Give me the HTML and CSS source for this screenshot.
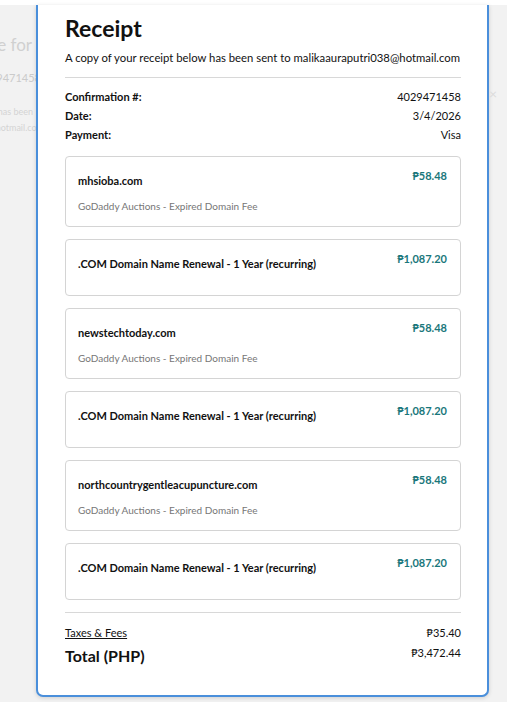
FILE: index.html
```html
<!DOCTYPE html>
<html>
<head>
<meta charset="utf-8">
<link rel="stylesheet" href="styles.css">
</head>
<body>
<div class="topstrip"></div>
<div class="page">
  <div class="bg-left">
    <div class="bg-title">Purchase for</div>
    <div class="bg-num">4029471458</div>
    <div class="bg-small bg-s1">A copy of your receipt below has been</div>
    <div class="bg-small bg-s2">malikaauraputri038@hotmail.com</div>
  </div>
  <div class="modal">
    <h1 class="title">Receipt</h1>
    <p class="lead">A copy of your receipt below has been sent to malikaauraputri038@hotmail.com</p>
    <div class="meta">
      <div class="meta-row"><span class="meta-label">Confirmation #:</span><span>4029471458</span></div>
      <div class="meta-row"><span class="meta-label">Date:</span><span>3/4/2026</span></div>
      <div class="meta-row"><span class="meta-label">Payment:</span><span>Visa</span></div>
    </div>
    <div class="items">
      <div class="card">
        <div class="card-main">
          <div class="card-title">mhsioba.com</div>
          <div class="card-sub">GoDaddy Auctions - Expired Domain Fee</div>
        </div>
        <div class="price">₱58.48</div>
      </div>
      <div class="card">
        <div class="card-main">
          <div class="card-title">.COM Domain Name Renewal - 1 Year (recurring)</div>
        </div>
        <div class="price">₱1,087.20</div>
      </div>
      <div class="card">
        <div class="card-main">
          <div class="card-title">newstechtoday.com</div>
          <div class="card-sub">GoDaddy Auctions - Expired Domain Fee</div>
        </div>
        <div class="price">₱58.48</div>
      </div>
      <div class="card">
        <div class="card-main">
          <div class="card-title">.COM Domain Name Renewal - 1 Year (recurring)</div>
        </div>
        <div class="price">₱1,087.20</div>
      </div>
      <div class="card">
        <div class="card-main">
          <div class="card-title">northcountrygentleacupuncture.com</div>
          <div class="card-sub">GoDaddy Auctions - Expired Domain Fee</div>
        </div>
        <div class="price">₱58.48</div>
      </div>
      <div class="card">
        <div class="card-main">
          <div class="card-title">.COM Domain Name Renewal - 1 Year (recurring)</div>
        </div>
        <div class="price">₱1,087.20</div>
      </div>
    </div>
    <div class="totals">
      <div class="tot-row"><a class="taxes">Taxes &amp; Fees</a><span>₱35.40</span></div>
      <div class="tot-row total"><span class="total-label">Total (PHP)</span><span class="total-val">₱3,472.44</span></div>
    </div>
  </div>
  <div class="bg-right"><span class="bg-close">×</span></div>
</div>
</body>
</html>
```
FILE: styles.css
```css
* { box-sizing: border-box; }
html, body { margin: 0; padding: 0; }
body {
  width: 507px;
  height: 702px;
  overflow: hidden;
  background: #ffffff;
  font-family: "Lato", "Open Sans", sans-serif;
  color: #111111;
}
.topstrip { height: 5px; background: #ffffff; }
.page {
  display: flex;
  height: 697px;
  background: #f2f2f2;
}
.bg-left {
  width: 36px;
  flex: none;
  overflow: hidden;
  display: flex;
  flex-direction: column;
  align-items: flex-end;
  padding-top: 30px;
  white-space: nowrap;
}
.bg-title {
  font-size: 17px;
  line-height: 20px;
  color: #d0d0d0;
  margin-right: 4px;
}
.bg-num {
  font-size: 11px;
  line-height: 14px;
  margin-top: 16px;
  margin-right: -5px;
  color: #cbcbcb;
}
.bg-small {
  font-size: 9px;
  line-height: 16px;
  color: #d4d4d4;
}
.bg-s1 { margin-top: 19px; margin-right: 3px; }
.bg-s2 { margin-right: -8px; }
.bg-right {
  flex: 1;
  position: relative;
}
.bg-close {
  position: absolute;
  left: 0;
  top: 80px;
  font-size: 14px;
  color: #dcdcdc;
}
.modal {
  width: 453px;
  flex: none;
  height: 692px;
  background: #ffffff;
  border: 2px solid #4a8fdb;
  border-top: none;
  border-radius: 0 0 7px 7px;
  padding: 9px 26px 0 27px;
  box-shadow: 0 1px 4px rgba(0,0,0,0.15);
}
.title {
  margin: 0;
  font-size: 23px;
  line-height: 28px;
  font-weight: 700;
}
.lead {
  margin: 8px 0 0;
  font-size: 11.3px;
  line-height: 16px;
}
.meta {
  border-top: 1px solid #d8d8d8;
  margin-top: 11px;
  padding-top: 9px;
}
.meta-row {
  display: flex;
  justify-content: space-between;
  font-size: 11px;
  line-height: 19px;
}
.meta-label { font-weight: 700; }
.items {
  margin-top: 12px;
  display: flex;
  flex-direction: column;
  gap: 12px;
}
.card {
  display: flex;
  justify-content: space-between;
  align-items: flex-start;
  border: 1px solid #d4d4d4;
  border-radius: 4px;
  padding: 12px 13px 12px 12px;
  min-height: 57px;
}
.card-title {
  font-size: 11px;
  font-weight: 700;
  line-height: 20px;
  margin-top: 2px;
}
.card-sub {
  font-size: 10px;
  line-height: 16px;
  margin-top: 7px;
  color: #767676;
}
.price {
  font-size: 11px;
  font-weight: 700;
  line-height: 14px;
  color: #1a777b;
}
.totals {
  margin-top: 12px;
  border-top: 1px solid #d8d8d8;
  padding-top: 12px;
}
.tot-row {
  display: flex;
  justify-content: space-between;
  align-items: flex-start;
  font-size: 11px;
  line-height: 16px;
}
.taxes { text-decoration: underline; color: #111; }
.total { margin-top: 4px; }
.total-label { font-size: 16px; font-weight: 700; line-height: 22px; }
.total-val { line-height: 16px; }
```
